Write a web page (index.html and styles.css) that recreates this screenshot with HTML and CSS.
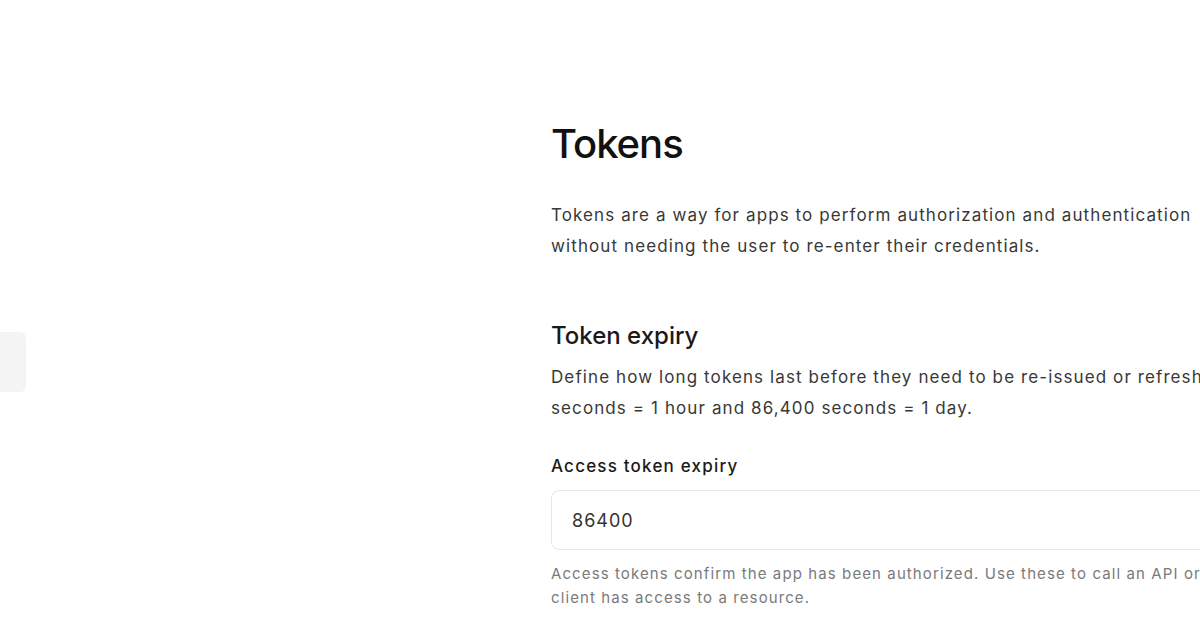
FILE: index.html
```html
<!doctype html>
<html>
<head>
	<meta charset="utf-8"/>
	<title>Tokens</title>
	<link rel="stylesheet" href="styles.css">
</head>
<body>
	<div class="page">
		<aside class="sidebar">
			<div class="nav-item"></div>
		</aside>

		<main class="content">
			<h1>Tokens</h1>
			<p class="intro">Tokens are a way for apps to perform authorization and authentication without needing the user to re-enter their credentials.</p>

			<section class="section">
				<h2>Token expiry</h2>
				<p class="desc">Define how long tokens last before they need to be re-issued or refreshed. For example, 3,600 seconds = 1 hour and 86,400 seconds = 1 day.</p>

				<div class="field">
					<label for="access">Access token expiry</label>
					<input type="text" id="access" value="86400"/>
					<p class="help">Access tokens confirm the app has been authorized. Use these to call an API or check a client has access to a resource.</p>
				</div>
			</section>
		</main>
	</div>
</body>
</html>
```

FILE: styles.css
```css
html, body {
	margin: 0;
	padding: 0;
	background: #fff;
	overflow: hidden;
}
body {
	font-family: Inter, "Noto Sans", sans-serif;
	color: #1a1a1a;
}
.page {
	display: flex;
	width: 1200px;
	height: 628px;
}
.sidebar {
	width: 26px;
	flex-shrink: 0;
	padding-top: 332px;
}
.nav-item {
	height: 60px;
	background-color: #f4f4f4;
	border-radius: 0 6px 6px 0;
}
.content {
	padding-left: 525px;
	padding-top: 118px;
	width: 900px;
	flex-shrink: 0;
}
h1 {
	font-size: 40px;
	font-weight: 500;
	letter-spacing: -1px;
	line-height: 52px;
	margin: 0 0 30px 0;
	color: #111;
}
.intro, .desc {
	font-size: 17px;
	line-height: 31px;
	letter-spacing: 1.1px;
	color: #383838;
	margin: 0;
}
.intro {
	max-width: 690px;
}
.section {
	margin-top: 58px;
}
h2 {
	font-size: 24px;
	font-weight: 500;
	line-height: 32px;
	margin: 0 0 10px 0;
	color: #1a1a1a;
}
.field {
	margin-top: 30px;
}
label {
	display: block;
	font-size: 17px;
	font-weight: 500;
	letter-spacing: 1.2px;
	line-height: 24px;
	color: #1a1a1a;
	margin-bottom: 12px;
}
input[type="text"] {
	display: block;
	box-sizing: border-box;
	width: 100%;
	height: 60px;
	padding: 0 20px;
	font-family: inherit;
	font-size: 18px;
	letter-spacing: 1px;
	color: #333;
	border: 1px solid #e6e6e6;
	border-radius: 8px;
	outline: none;
}
.help {
	max-width: 760px;
	font-size: 15px;
	line-height: 24px;
	letter-spacing: 1.1px;
	color: #7a7a7a;
	margin: 12px 0 0 0;
}
```
